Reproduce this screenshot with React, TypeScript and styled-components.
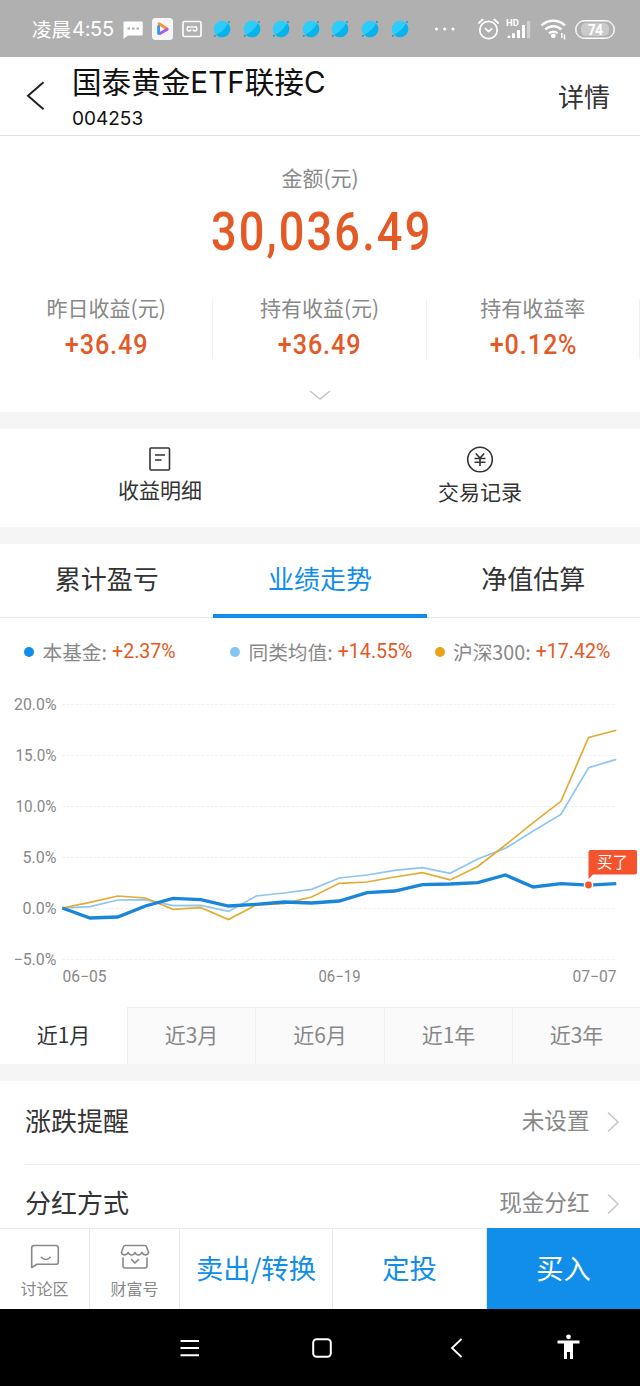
import React from "react";
import styled, { createGlobalStyle } from "styled-components";

const GlobalStyle = createGlobalStyle`
  * { box-sizing: border-box; }
  body { margin: 0; background: #fff; }
`;

const CJK = `"Noto Sans CJK SC", sans-serif`;
const NUM = `Roboto, "Noto Sans CJK SC", sans-serif`;
const WIDE = `Inter, "Noto Sans CJK SC", sans-serif`;
const BLUE = "#108ee9";
const RED = "#e35a27";

const Screen = styled.div`
  width: 640px;
  height: 1386px;
  display: flex;
  flex-direction: column;
  overflow: hidden;
  background: #fff;
  color: #333;
  font-family: ${CJK};
  white-space: nowrap;
  & > * { flex-shrink: 0; }
  svg { display: block; flex-shrink: 0; }
`;

/* ---------- status bar ---------- */
const StatusBar = styled.div`
  height: 57px;
  background: #b0b0b0;
  color: #fff;
  display: flex;
  align-items: center;
  padding: 1px 24px 0 32px;
`;
const Clock = styled.div`
  width: 91px;
  height: 30px;
  line-height: 30px;
  font-size: 19.5px;
  display: flex;
  align-items: center;
`;
const ClockDigits = styled.span`
  font: 400 20px/30px ${WIDE};
  margin-left: 1px;
  letter-spacing: -0.3px;
`;
const Notices = styled.div`
  display: flex;
  align-items: center;
  gap: 9px;
`;
const Planets = styled.div`
  display: flex;
  gap: 11.6px;
  margin-left: 2px;
`;
const Indicators = styled.div`
  margin-left: auto;
  display: flex;
  align-items: center;
`;
const Spacer = styled.div<{ $w: number }>`
  width: ${(p) => p.$w}px;
`;
const Battery = styled.div`
  width: 40px;
  height: 19px;
  border: 1.5px solid #fff;
  border-radius: 10px;
  box-shadow: inset 0 0 0 0.5px #fff;
  padding: 2px 5px;
  display: flex;
`;
const BatteryLevel = styled.div`
  flex: 1;
  border-radius: 5px;
  background: #cacaca;
  font: 700 14px/14px ${NUM};
  letter-spacing: -0.8px;
  text-align: center;
`;

/* ---------- header ---------- */
const Header = styled.header`
  height: 79px;
  border-bottom: 1px solid #e2e2e2;
  display: flex;
  padding: 0 30px 0 26px;
`;
const BackButton = styled.div`
  width: 46px;
  padding-top: 24px;
`;
const TitleBlock = styled.div`
  flex: 1;
  color: #111;
`;
const Title = styled.div`
  font: 400 29.6px/40px ${WIDE};
  padding-top: 5px;
  height: 46px;
`;
const Code = styled.div`
  font: 400 19px/32px ${WIDE};
`;
const DetailLink = styled.div`
  font-size: 26px;
  line-height: 78px;
`;

/* ---------- summary ---------- */
const Summary = styled.section`
  height: 276px;
  display: flex;
  flex-direction: column;
  align-items: center;
`;
const AmountLabel = styled.div`
  margin-top: 26px;
  font-size: 21px;
  line-height: 30px;
  color: #888;
`;
const Amount = styled.div`
  font: 500 54px/64px ${NUM};
  color: ${RED};
  margin: 8px 0 0 4px;
  letter-spacing: 2.6px;
  transform: scaleX(0.835);
`;
const Metrics = styled.div`
  width: 100%;
  margin-top: 35px;
  display: grid;
  grid-template-columns: repeat(3, 1fr);
`;
const Metric = styled.div`
  height: 60px;
  text-align: center;
  border-right: 1px solid #f0f0f0;
`;
const MetricLabel = styled.div`
  font-size: 21px;
  line-height: 30px;
  margin-top: -7px;
  color: #888;
`;
const MetricValue = styled.div`
  font: 500 27.5px/34px ${NUM};
  margin-top: 6px;
  color: ${RED};
  letter-spacing: 1px;
  text-indent: 1px;
  transform: scaleX(0.915);
`;
const Expand = styled.div`
  margin-top: 31px;
`;

const Gap = styled.div`
  height: 17px;
  background: #f5f5f5;
`;

/* ---------- actions ---------- */
const Actions = styled.section`
  height: 98px;
  display: grid;
  grid-template-columns: 1fr 1fr;
`;
const Action = styled.div<{ $top: number }>`
  display: flex;
  flex-direction: column;
  align-items: center;
  padding-top: ${(p) => p.$top}px;
  font-size: 21px;
  line-height: 30px;
  gap: 3px;
`;

/* ---------- performance ---------- */
const Tabs = styled.nav`
  height: 74px;
  display: grid;
  grid-template-columns: repeat(3, 1fr);
  border-bottom: 1px solid #e6e6e6;
`;
const Tab = styled.div<{ $active?: boolean }>`
  height: 74px;
  text-align: center;
  font-size: 26px;
  line-height: 68px;
  color: ${(p) => (p.$active ? BLUE : "#333")};
  border-bottom: 4px solid ${(p) => (p.$active ? BLUE : "transparent")};
`;
const Legend = styled.div`
  height: 72px;
  padding: 0 24px;
  display: grid;
  grid-template-columns: 206px 204.5px 1fr;
`;
const LegendItem = styled.div<{ $dot: string }>`
  display: flex;
  align-items: center;
  height: 66px;
  font-size: 19.7px;
  color: #888;
  &::before {
    content: "";
    width: 10px;
    height: 10px;
    margin: 2px 8.5px 0 0;
    border-radius: 50%;
    background: ${(p) => p.$dot};
  }
`;
const LegendValue = styled.span`
  font: 400 19.6px/24px ${NUM};
  color: ${RED};
  margin: 2px 0 0 5px;
`;
const ChartBox = styled.div`
  height: 317px;
`;
const Ranges = styled.nav`
  height: 57px;
  display: grid;
  grid-template-columns: 127px 128px 129px 128px 128px;
`;
const Range = styled.div<{ $active?: boolean }>`
  text-align: center;
  font-size: 21px;
  line-height: ${(p) => (p.$active ? 54 : 53)}px;
  color: ${(p) => (p.$active ? "#333" : "#888")};
  background: ${(p) => (p.$active ? "#fff" : "#fafafa")};
  border: 0 solid #eee;
  border-width: ${(p) => (p.$active ? "0" : "1px 0 0 1px")};
`;

/* ---------- settings ---------- */
const Settings = styled.section`
  height: 147px;
  padding-left: 25px;
  overflow: hidden;
`;
const SettingRow = styled.div<{ $first?: boolean }>`
  height: ${(p) => (p.$first ? 84 : 79)}px;
  border-bottom: ${(p) => (p.$first ? 1 : 0)}px solid #eee;
  display: flex;
  align-items: center;
  padding-right: 20px;
  font-size: 26px;
  line-height: 40px;
  padding-bottom: 6px;
`;
const SettingValue = styled.div`
  margin-left: auto;
  margin-right: 16.5px;
  font-size: 22.6px;
  color: #888;
`;
const Chevron = styled.div`
  padding-top: 4px;
`;

/* ---------- bottom bar ---------- */
const BottomBar = styled.footer`
  height: 81px;
  display: grid;
  grid-template-columns: 90px 90px 153px 154px 153px;
  background: #fff;
`;
const BarIcon = styled.div`
  border: 0 solid #e8e8e8;
  border-width: 1px 1px 0 0;
  display: flex;
  flex-direction: column;
  align-items: center;
  padding-top: 15px;
  gap: 6px;
  font-size: 16px;
  line-height: 24px;
  color: #888;
`;
const BarButton = styled.div<{ $primary?: boolean }>`
  border: 0 solid #e8e8e8;
  border-width: ${(p) => (p.$primary ? "0" : "1px 1px 0 0")};
  background: ${(p) => (p.$primary ? BLUE : "#fff")};
  color: ${(p) => (p.$primary ? "#fff" : BLUE)};
  text-align: center;
  font-size: 27.3px;
  line-height: ${(p) => (p.$primary ? 79 : 77)}px;
`;
const SystemNav = styled.div`
  height: 77px;
  background: #000;
  display: flex;
  align-items: center;
  padding-left: 180px;
`;

const Planet = () => (
  <svg width="18" height="18" viewBox="0 0 18 18">
    <circle cx="9" cy="9" r="8.3" fill="#2dccfb" />
    <path d="M15 3.2A8.3 8.3 0 0 1 3 14.8C8 12.5 12.500 8 15 3.200Z" fill="#06b3ea" />
    <circle cx="15.900" cy="2" r="1.100" fill="#199fca" />
    <circle cx="1.800" cy="15.800" r="1.100" fill="#199fca" />
  </svg>
);

const ChevronRight = () => (
  <svg width="14" height="22" viewBox="0 0 14 22" fill="none" stroke="#c7c7cc" strokeWidth="1.600">
    <path d="M2 1.500 12 11 2 20.500" />
  </svg>
);

/* ---------- chart ---------- */
const fund = [0, -0.98, -0.88, 0.2, 0.95, 0.82, 0.2, 0.36, 0.59, 0.49, 0.69, 1.5, 1.67, 2.29, 2.35, 2.48, 3.24, 2.06, 2.39, 2.25, 2.39];
const peers = [0, 0.13, 0.78, 0.82, 0.23, 0.26, -0.33, 1.18, 1.47, 1.83, 2.94, 3.24, 3.69, 3.95, 3.4, 4.8, 5.85, 7.55, 9.18, 13.76, 14.57];
const csi = [0, 0.56, 1.18, 0.98, -0.13, 0.03, -1.14, 0.3, 0.42, 1.08, 2.42, 2.55, 3.04, 3.46, 2.75, 4.08, 6.18, 8.37, 10.46, 16.73, 17.42];
const px = (i: number) => 62.3 + i * 27.7;
const py = (v: number) => 218 - v * 10.2;
const line = (d: number[]) => d.map((v, i) => `${px(i).toFixed(1)},${py(v).toFixed(1)}`).join(" ");

const ticks: [number, string, number][] = [
  [20, "20.0%", 42.5],
  [15, "15.0%", 41],
  [10, "10.0%", 41],
  [5, "5.0%", 34],
  [0, "0.0%", 34],
  [-5, "−5.0%", 43],
];
const dates: [number, string][] = [
  [62.5, "06−05"],
  [318.5, "06−19"],
  [572.5, "07−07"],
];

const AxisText = styled.text`
  font: 400 15.8px ${NUM};
  fill: #888;
`;
const FlagText = styled.text`
  font: 400 15.5px ${CJK};
  fill: #fff;
`;

const Chart = () => (
  <svg width="640" height="317" viewBox="0 0 640 317">
    {ticks.map(([v, label, w]) => (
      <g key={label}>
        <line x1="62" x2="616" y1={py(v) + 0.5} y2={py(v) + 0.5} stroke="#f0f0f0" strokeDasharray="3 1.500" />
        <AxisText x={56.500 - w} y={py(v) + 6.200} textLength={w} lengthAdjust="spacingAndGlyphs">
          {label}
        </AxisText>
      </g>
    ))}
    {dates.map(([x, label]) => (
      <AxisText key={label} x={x} y="292" textLength={label === "06−19" ? 42 : 44} lengthAdjust="spacingAndGlyphs">
        {label}
      </AxisText>
    ))}
    <polyline points={line(peers)} fill="none" stroke="#8ec5ef" strokeWidth="1.700" />
    <polyline points={line(csi)} fill="none" stroke="#e2ac33" strokeWidth="1.700" />
    <polyline points={line(fund)} fill="none" stroke="#1a86d9" strokeWidth="3.300" />
    <circle cx="588.500" cy="195" r="4.800" fill="#fff" />
    <circle cx="588.500" cy="195" r="3.400" fill="#f5532d" />
    <path d="M590.500 160H635a2 2 0 0 1 2 2V182.500a2 2 0 0 1-2 2H593L588.500 189V162a2 2 0 0 1 2-2Z" fill="#f5532d" />
    <FlagText x="597" y="178">买了</FlagText>
  </svg>
);

export default function App() {
  return (
    <Screen>
      <GlobalStyle />
      <StatusBar>
        <Clock>
          凌晨<ClockDigits>4:55</ClockDigits>
        </Clock>
        <Notices>
          <svg width="20" height="19" viewBox="0 0 20 19">
            <path d="M1.200 1.500h17.500a1 1 0 0 1 1 1v12a1 1 0 0 1-1 1H5L.5 19V2.500a1 1 0 0 1 .7-1Z" fill="#fff" />
            <path d="M4.500 8.500H7M9 8.500h2.500M13.500 8.500H16" stroke="#aaa" strokeWidth="2.200" />
          </svg>
          <svg width="21" height="22" viewBox="0 0 21 22">
            <rect width="21" height="22" rx="3.500" fill="#f6f6f8" />
            <path d="M7 5.800 14.500 10.500" stroke="#f79433" strokeWidth="2.800" strokeLinecap="round" />
            <path d="M15.300 11.200 8 15.500" stroke="#b15be0" strokeWidth="2.800" strokeLinecap="round" />
            <path d="M6.600 8.500V15.500" stroke="#2f9bf0" strokeWidth="2.800" strokeLinecap="round" />
          </svg>
          <svg width="20" height="18" viewBox="0 0 20 18" fill="none" stroke="#fff" strokeWidth="1.600">
            <rect x="1" y="1.500" width="18" height="15" rx="1.500" />
            <path d="M5 7h10" strokeWidth="1.400" />
            <path d="M6.800 7a2 2 0 1 0 2.200 2.400M13.200 7a2 2 0 1 1-2.200 2.400" strokeWidth="1.600" />
          </svg>
          <Planets>
            {[0, 1, 2, 3, 4, 5, 6].map((i) => (
              <Planet key={i} />
            ))}
          </Planets>
        </Notices>
        <Indicators>
          <svg width="22" height="4" viewBox="0 0 22 4" fill="#fff">
            <circle cx="1.500" cy="2" r="1.500" />
            <circle cx="9.700" cy="2" r="1.500" />
            <circle cx="18" cy="2" r="1.500" />
          </svg>
          <Spacer $w={21} />
          <svg width="22" height="22" viewBox="0 0 22 22" fill="none" stroke="#fff" strokeWidth="1.700" strokeLinecap="round">
            <circle cx="10.500" cy="12" r="8.700" />
            <path d="M7.500 10.500 10.500 13.500l3.200-2.500M.8 5 4.700 1.500M20.200 5 16.300 1.500" />
          </svg>
          <Spacer $w={6} />
          <svg width="26" height="22" viewBox="0 0 26 22" fill="#fff">
            <path d="M1.500 18.500 4.200 17V20H1.500zM6 15.200h3V20H6zM11 12h3v8h-3zM16 7h3v13h-3z" />
            <path d="M21 3h3.200v17H21z" opacity=".4" />
            <text x="0" y="8.200" fontSize="9.500" fontFamily="Roboto" fontWeight="700">HD</text>
          </svg>
          <Spacer $w={8} />
          <svg width="28" height="24" viewBox="0 0 28 24" fill="none" stroke="#fff" strokeWidth="2.400">
            <path d="M1.500 8.500A17 17 0 0 1 25 8.500M5.300 12.500a11.500 11.500 0 0 1 16 0M9.100 16.300a6 6 0 0 1 8.400 0" />
            <circle cx="13.300" cy="18.800" r="1.200" />
            <path d="M21.800 16v5M24.500 17.500v5" strokeWidth="1.500" />
          </svg>
          <Spacer $w={7} />
          <Battery>
            <BatteryLevel>74</BatteryLevel>
          </Battery>
          <Spacer $w={1} />
        </Indicators>
      </StatusBar>

      <Header>
        <BackButton>
          <svg width="19" height="30" viewBox="0 0 19 30" fill="none" stroke="#222" strokeWidth="2">
            <path d="M17.500 1.200 2 14.700 17.500 28.200" />
          </svg>
        </BackButton>
        <TitleBlock>
          <Title>国泰黄金ETF联接C</Title>
          <Code>004253</Code>
        </TitleBlock>
        <DetailLink>详情</DetailLink>
      </Header>

      <Summary>
        <AmountLabel>金额(元)</AmountLabel>
        <Amount>30,036.49</Amount>
        <Metrics>
          <Metric>
            <MetricLabel>昨日收益(元)</MetricLabel>
            <MetricValue>+36.49</MetricValue>
          </Metric>
          <Metric>
            <MetricLabel>持有收益(元)</MetricLabel>
            <MetricValue>+36.49</MetricValue>
          </Metric>
          <Metric>
            <MetricLabel>持有收益率</MetricLabel>
            <MetricValue>+0.12%</MetricValue>
          </Metric>
        </Metrics>
        <Expand>
          <svg width="22" height="11" viewBox="0 0 22 11" fill="none" stroke="#c4c4c4" strokeWidth="1.600">
            <path d="M1 1 11 9 21 1" />
          </svg>
        </Expand>
      </Summary>
      <Gap />

      <Actions>
        <Action $top={18}>
          <svg width="22" height="24" viewBox="0 0 22 24" fill="none" stroke="#333" strokeWidth="1.600">
            <rect x="1" y="1" width="19.500" height="22" rx="1" />
            <path d="M6 8h10M6 13h6.500" />
          </svg>
          收益明细
        </Action>
        <Action $top={17}>
          <svg width="28" height="27" viewBox="0 0 28 27" fill="none" stroke="#333" strokeWidth="1.600">
            <circle cx="14" cy="13.500" r="12.300" />
            <path d="M9.800 7.500 14 12l4.200-4.500M14 12v8M8.500 12.500h11M8.500 16.200h11" />
          </svg>
          交易记录
        </Action>
      </Actions>
      <Gap />

      <Tabs>
        <Tab>累计盈亏</Tab>
        <Tab $active>业绩走势</Tab>
        <Tab>净值估算</Tab>
      </Tabs>
      <Legend>
        <LegendItem $dot="#108ee9">
          本基金:<LegendValue>+2.37%</LegendValue>
        </LegendItem>
        <LegendItem $dot="#85c4f1">
          同类均值:<LegendValue>+14.55%</LegendValue>
        </LegendItem>
        <LegendItem $dot="#e8a317">
          沪深300:<LegendValue>+17.42%</LegendValue>
        </LegendItem>
      </Legend>
      <ChartBox>
        <Chart />
      </ChartBox>
      <Ranges>
        <Range $active>近1月</Range>
        <Range>近3月</Range>
        <Range>近6月</Range>
        <Range>近1年</Range>
        <Range>近3年</Range>
      </Ranges>
      <Gap />

      <Settings>
        <SettingRow $first>
          涨跌提醒
          <SettingValue>未设置</SettingValue>
          <Chevron>
            <ChevronRight />
          </Chevron>
        </SettingRow>
        <SettingRow>
          分红方式
          <SettingValue>现金分红</SettingValue>
          <Chevron>
            <ChevronRight />
          </Chevron>
        </SettingRow>
      </Settings>

      <BottomBar>
        <BarIcon>
          <svg width="30" height="26" viewBox="0 0 30 26" fill="none" stroke="#888" strokeWidth="1.600" strokeLinejoin="round" strokeLinecap="round">
            <path d="M4 1.500H26a2.300 2.300 0 0 1 2.300 2.300V18A2.300 2.300 0 0 1 26 20.300H7L1.700 23.500V3.800A2.300 2.300 0 0 1 4 1.500Z" />
            <path d="M11.300 13.300c2.500 2.900 6.500 2.900 9 0" />
          </svg>
          讨论区
        </BarIcon>
        <BarIcon>
          <svg width="30" height="26" viewBox="0 0 30 26" fill="none" stroke="#888" strokeWidth="1.600" strokeLinejoin="round" strokeLinecap="round">
            <path d="M5 1.500H25a1.500 1.500 0 0 1 1.400 1L28.500 8c0 3.500-4.800 4-6.700.5-1.400 3.300-5.400 3.300-6.800 0-1.400 3.300-5.400 3.300-6.800 0C6.300 12 1.500 11.500 1.500 8L3.600 2.500A1.500 1.500 0 0 1 5 1.500Z" />
            <path d="M3 14v8a2 2 0 0 0 2 2H25a2 2 0 0 0 2-2V14M11.500 15.500 15 19l3.500-3.500" />
          </svg>
          财富号
        </BarIcon>
        <BarButton>卖出/转换</BarButton>
        <BarButton>定投</BarButton>
        <BarButton $primary>买入</BarButton>
      </BottomBar>

      <SystemNav>
        <svg width="19" height="18" viewBox="0 0 19 18" stroke="#fff" strokeWidth="2">
          <path d="M.5 2H19M.5 9H19M.5 16.200H19" />
        </svg>
        <Spacer $w={113} />
        <svg width="20" height="20" viewBox="0 0 20 20" fill="none" stroke="#fff" strokeWidth="2">
          <rect x="1.200" y="1.200" width="17.600" height="17.600" rx="3.500" />
        </svg>
        <Spacer $w={118} />
        <svg width="13" height="20" viewBox="0 0 13 20" fill="none" stroke="#fff" strokeWidth="1.800">
          <path d="M11.500 1 2 10l9.500 9" />
        </svg>
        <Spacer $w={94} />
        <svg width="23" height="28" viewBox="0 0 23 28" fill="#fff">
          <circle cx="11.500" cy="2.800" r="2.400" />
          <path d="M.5 6.500h22v3H16V25h-3v-7h-3v7H7V9.500H.5Z" />
        </svg>
      </SystemNav>
    </Screen>
  );
}
